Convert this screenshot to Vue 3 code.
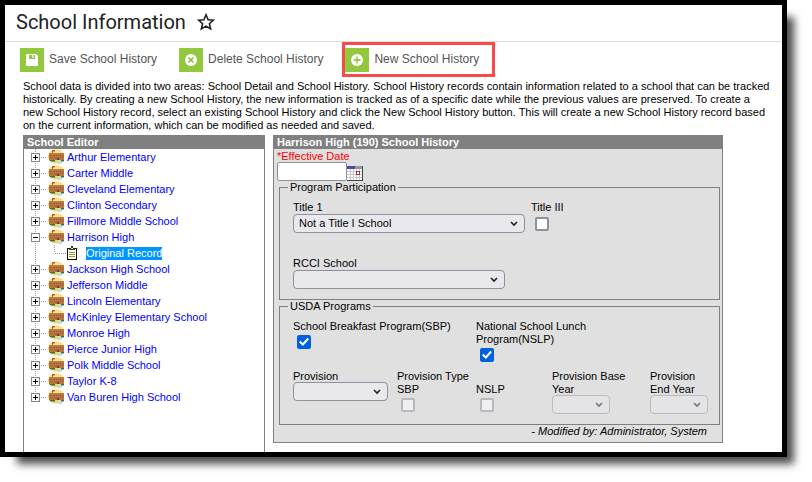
<script setup>
import { ref } from 'vue'

const schools = ref([
  { name: 'Arthur Elementary' },
  { name: 'Carter Middle' },
  { name: 'Cleveland Elementary' },
  { name: 'Clinton Secondary' },
  { name: 'Fillmore Middle School' },
  { name: 'Harrison High', open: true, records: ['Original Record'] },
  { name: 'Jackson High School' },
  { name: 'Jefferson Middle' },
  { name: 'Lincoln Elementary' },
  { name: 'McKinley Elementary School' },
  { name: 'Monroe High' },
  { name: 'Pierce Junior High' },
  { name: 'Polk Middle School' },
  { name: 'Taylor K-8' },
  { name: 'Van Buren High School' },
])

const effectiveDate = ref('')
const title1 = ref('Not a Title I School')
const title3 = ref(false)
const breakfast = ref(true)
const lunch = ref(true)
</script>

<template>
  <div class="window">
    <header class="title-bar">
      <h1>School Information</h1>
      <button class="star" type="button" aria-label="Add to favorites">
        <svg width="18" height="18" viewBox="0 0 18 18">
          <path d="M9 1.8 11.1 6.7 16.4 7.2 12.4 10.7 13.6 15.9 9 13.1 4.4 15.9 5.6 10.7 1.6 7.2 6.9 6.7Z" fill="none" stroke="#222" stroke-width="1.6" />
        </svg>
      </button>
    </header>

    <nav class="toolbar">
      <button class="tool" type="button">
        <svg width="24" height="24" viewBox="0 0 24 24">
          <rect width="24" height="24" fill="#92c83e" />
          <path d="M6 7q0-1 1-1h9l2 2v9q0 1-1 1H7q-1 0-1-1z" fill="#fff" />
          <path d="M9 7h6v4H9z" fill="#92c83e" />
          <path d="M12 7h2v3h-2z" fill="#d4eab4" />
        </svg>
        <span>Save School History</span>
      </button>
      <button class="tool" type="button">
        <svg width="24" height="24" viewBox="0 0 24 24">
          <rect width="24" height="24" fill="#92c83e" />
          <circle cx="12" cy="12" r="6" fill="#fff" />
          <path d="M9.500 9.500l5 5m0-5l-5 5" stroke="#84bd2d" stroke-width="1.5" />
        </svg>
        <span>Delete School History</span>
      </button>
      <button class="tool marked" type="button">
        <svg width="24" height="24" viewBox="0 0 24 24">
          <rect width="24" height="24" fill="#92c83e" />
          <circle cx="12" cy="12" r="6" fill="#fff" />
          <path d="M12 8.500v7M8.500 12h7" stroke="#84bd2d" stroke-width="1.3" />
        </svg>
        <span>New School History</span>
      </button>
    </nav>

    <p class="intro">
      School data is divided into two areas: School Detail and School History. School History records contain information related to a school that can be tracked historically. By creating a new School History, the new information is tracked as of a specific date while the previous values are preserved. To create a new School History record, select an existing School History and click the New School History button. This will create a new School History record based on the current information, which can be modified as needed and saved.
    </p>

    <main class="panels">
      <section class="editor">
        <h2>School Editor</h2>
        <ul class="tree">
          <li v-for="(school, i) in schools" :key="school.name">
            <div class="row">
              <button class="toggle" type="button" :aria-label="'Toggle ' + school.name" @click="school.open = !school.open">
                <svg width="24" height="16" viewBox="0 0 24 16" shape-rendering="crispEdges">
                  <path :d="i === schools.length - 1 ? 'M11.5 0v5' : 'M11.5 0v16'" stroke="#999" stroke-dasharray="1 1" />
                  <path d="M17 8.500h6" stroke="#999" stroke-dasharray="1 1" />
                  <rect x="7.5" y="4.5" width="8" height="8" fill="#fff" stroke="#888" />
                  <path d="M9 8.500h5" stroke="#000" />
                  <path v-if="!school.open" d="M11.500 6v5" stroke="#000" />
                </svg>
              </button>
              <svg width="16" height="16" viewBox="0 0 16 16">
                <ellipse cx="8" cy="7.5" rx="8" ry="7" fill="#f9d455" />
                <ellipse cx="8" cy="4.5" rx="5.5" ry="3" fill="#ffe98a" />
                <path d="M4 1h3v1.500H5V4H4z" fill="#c8503c" />
                <path d="M1 4h15v7H1z" fill="#b8743f" />
                <path d="M1 4h15v1H1z" fill="#c4804c" />
                <path d="M2 6.500h13M2 8.500h13" stroke="#99603a" stroke-dasharray="1 1" />
                <path d="M1 11h6v1.500H3zM13 11h3v1.500h-3z" fill="#2d7a44" />
                <path d="M9 9h2v2H9z" fill="#6d4630" />
                <path d="M9 11h3l3 4h-5z" fill="#d3d6d8" />
              </svg>
              <a href="#">{{ school.name }}</a>
            </div>
            <div v-if="school.open && school.records">
              <div v-for="record in school.records" :key="record" class="row record">
                <svg width="53" height="16" viewBox="0 0 53 16" shape-rendering="crispEdges">
                  <path d="M11.500 0v16M30.500 0v8M31 8.500h11" fill="none" stroke="#999" stroke-dasharray="1 1" />
                  <path d="M43.500 3.500h9v11h-9z" fill="#fffff0" stroke="#111" />
                  <path d="M45 7.500h6M45 9.500h6M45 11.500h6" stroke="#9a9238" />
                  <path d="M45 3h6v2h-6zM47 1h2v2h-2z" fill="#333" />
                  <path d="M47 3h2v1h-2z" fill="#e4dda0" />
                </svg>
                <a href="#" class="selected">{{ record }}</a>
              </div>
            </div>
          </li>
        </ul>
      </section>

      <section class="history">
        <h2>Harrison High (190) School History</h2>
        <div class="date">
          <label for="effective">*Effective Date</label>
          <div class="date-line">
            <input id="effective" v-model="effectiveDate" type="text" />
            <button type="button" aria-label="Pick a date">
              <svg width="16" height="15" viewBox="0 0 16 15" shape-rendering="crispEdges">
                <path d="M0 0h16v15H0z" fill="#fff" />
                <path d="M0 0h8v3H0z" fill="#4848a8" />
                <path d="M8 0h7v3H8z" fill="#999" />
                <path d="M0 5.500h15M0 8.500h15M0 11.500h15M3.500 3v11M6.500 3v11M9.500 3v11M12.500 3v11" stroke="#c8c8c8" />
                <path d="M9.500 5.500h3v3h-3z" fill="#fff" stroke="#a03c44" />
                <path d="M15.500 0v15M0 14.500h16" stroke="#444" />
              </svg>
            </button>
          </div>
        </div>

        <fieldset class="participation">
          <legend>Program Participation</legend>
          <div class="participation-grid">
            <div class="field">
              <label for="title1">Title 1</label>
              <span class="select">
                <select id="title1" v-model="title1">
                  <option>Not a Title I School</option>
                </select>
                <svg width="8" height="6" viewBox="0 0 8 6"><path d="M1 1l3 3 3-3" /></svg>
              </span>
            </div>
            <div class="field">
              <label for="title3">Title III</label>
              <input id="title3" v-model="title3" type="checkbox" />
            </div>
            <div class="field rcci">
              <label for="rcci">RCCI School</label>
              <span class="select">
                <select id="rcci"><option></option></select>
                <svg width="8" height="6" viewBox="0 0 8 6"><path d="M1 1l3 3 3-3" /></svg>
              </span>
            </div>
          </div>
        </fieldset>

        <fieldset class="usda">
          <legend>USDA Programs</legend>
          <div class="usda-grid">
            <div class="field double">
              <label for="sbp">School Breakfast Program(SBP)</label>
              <input id="sbp" v-model="breakfast" type="checkbox" />
            </div>
            <div class="field lunch">
              <label for="nslp">National School Lunch Program(NSLP)</label>
              <input id="nslp" v-model="lunch" type="checkbox" />
            </div>
            <div class="field provision">
              <label for="provision">Provision</label>
              <span class="select">
                <select id="provision"><option></option></select>
                <svg width="8" height="6" viewBox="0 0 8 6"><path d="M1 1l3 3 3-3" /></svg>
              </span>
            </div>
            <div class="types double" role="group" aria-labelledby="ptype">
              <span id="ptype" class="types-title">Provision Type</span>
              <div class="field">
                <label for="ptype-sbp">SBP</label>
                <input id="ptype-sbp" type="checkbox" disabled />
              </div>
              <div class="field">
                <label for="ptype-nslp">NSLP</label>
                <input id="ptype-nslp" type="checkbox" disabled />
              </div>
            </div>
            <div class="field year">
              <label for="base-year">Provision Base Year</label>
              <span class="select">
                <select id="base-year" disabled><option></option></select>
                <svg width="8" height="6" viewBox="0 0 8 6"><path d="M1 1l3 3 3-3" /></svg>
              </span>
            </div>
            <div class="field year">
              <label for="end-year">Provision<br />End Year</label>
              <span class="select">
                <select id="end-year" disabled><option></option></select>
                <svg width="8" height="6" viewBox="0 0 8 6"><path d="M1 1l3 3 3-3" /></svg>
              </span>
            </div>
          </div>
        </fieldset>
        <p class="modified">- Modified by: Administrator, System</p>
      </section>
    </main>
  </div>
</template>

<style>
body {
  background: #fff;
}
#app {
  display: flow-root;
}
</style>

<style scoped>
.window {
  box-sizing: border-box;
  display: flex;
  flex-direction: column;
  min-height: calc(100vh - 25px);
  margin: 0 25px 25px 0;
  border: 5px solid #000;
  background: #fff;
  box-shadow: 12px 12px 8px -5px rgba(0, 0, 0, 0.7);
  font: 11px/13px "Liberation Sans", Arial, sans-serif;
  color: #000;
}
button {
  padding: 0;
  border: 0;
  background: none;
  font: inherit;
  color: inherit;
  cursor: pointer;
}
svg {
  display: block;
  flex: none;
}
.title-bar {
  display: flex;
  align-items: center;
  gap: 11px;
  height: 36px;
  padding-left: 11px;
  border-bottom: 1px solid #ddd;
}
h1 {
  margin: 0;
  padding-bottom: 3px;
  font: 400 20px/24px Roboto, sans-serif;
  color: #222;
}
.star {
  padding-bottom: 3px;
}
.toolbar {
  display: flex;
  gap: 22px;
  padding: 6px 15px 8px;
}
.tool {
  position: relative;
  display: flex;
  align-items: center;
  gap: 5px;
  font: 12px/22px "Liberation Sans", Arial, sans-serif;
  color: #555;
}
.tool span {
  padding-bottom: 2px;
}
.marked::after {
  content: "";
  position: absolute;
  inset: -6px -16px -5px -3px;
  border: 3px solid #f94949;
}
.intro {
  margin: 0;
  padding: 0 11px 3px 18px;
}
.panels {
  display: grid;
  grid-template-columns: minmax(0, 242fr) minmax(0, 450fr);
  flex: 1;
  gap: 8px;
  padding: 0 59px 0 18px;
}
h2 {
  margin: 0;
  padding-left: 3px;
  background: gray;
  color: #fff;
  font: 700 11px/14px "Liberation Sans", Arial, sans-serif;
}
.editor {
  border: solid gray;
  border-width: 0 1px;
}
.tree {
  margin: 0;
  padding: 0;
  list-style: none;
}
.row {
  display: flex;
  align-items: center;
  height: 16px;
}
.row a {
  margin-left: 3px;
  color: #00f;
  text-decoration: none;
}
.row .selected {
  margin-left: 9px;
  background: #0095ff;
  color: #fff;
}
.history {
  align-self: start;
  border: solid gray;
  border-width: 0 1px 1px;
  background: #e0e0e0;
}
.date {
  padding: 1px 3px 0;
}
.date label {
  display: block;
  line-height: 12px;
  color: #f00;
}
.date-line {
  display: flex;
  align-items: flex-end;
}
.date-line input {
  box-sizing: border-box;
  width: 70px;
  height: 19px;
  border: 1px solid #8f8f9d;
  border-radius: 2px;
  font: inherit;
}
fieldset {
  margin: 0 2px 0 5px;
  padding: 0 11px 0 13px;
  border: 1px solid gray;
}
legend {
  margin-left: -5px;
  padding: 0 2px;
}
.field {
  display: flex;
  flex-direction: column;
  align-items: flex-start;
}
.select {
  display: grid;
  width: 100%;
  height: 19px;
  align-items: center;
}
.select > * {
  grid-area: 1 / 1;
}
.select svg {
  justify-self: end;
  margin-right: 7px;
  pointer-events: none;
}
.select path {
  fill: none;
  stroke: #222;
  stroke-width: 1.6;
}
select {
  appearance: none;
  box-sizing: border-box;
  width: 100%;
  height: 19px;
  padding: 0 20px 0 5px;
  border: 1px solid #8f8f9d;
  border-radius: 4px;
  background: #e9e9ed;
  font: inherit;
  color: #000;
}
select:disabled {
  border-color: #bbbbc4;
  background: #e4e4e6;
  opacity: 1;
}
select:disabled + svg path {
  stroke: #777;
}
input[type="checkbox"] {
  appearance: none;
  box-sizing: border-box;
  display: grid;
  width: 14px;
  height: 14px;
  margin: 3px 4px 0;
  border: 2px solid #8f8f9d;
  border-radius: 2px;
  background: #fff;
}
input[type="checkbox"]:checked {
  border-color: #0061e0;
  background: #0061e0;
}
input[type="checkbox"]:checked::before {
  content: "";
  background: #fff;
  clip-path: polygon(0 52%, 14% 38%, 38% 60%, 84% 8%, 100% 22%, 39% 90%);
}
input[type="checkbox"]:disabled {
  border-color: #b8b8c0;
  background: #efefef;
}
.participation-grid {
  display: grid;
  grid-template-columns: 232px 1fr;
  column-gap: 6px;
  row-gap: 24px;
  padding: 7px 0 10px;
}
.rcci {
  width: 212px;
}
.usda-grid {
  display: grid;
  grid-template-columns: 104fr 79fr 76fr 98fr 58fr;
  row-gap: 8px;
  padding: 7px 0 10px;
}
.usda .field input[type="checkbox"] {
  margin-top: 2px;
}
.usda .select {
  margin-top: -1px;
}
.double {
  grid-column: span 2;
}
.lunch {
  grid-column: span 3;
}
.lunch label {
  max-width: 130px;
}
.provision {
  padding-right: 9px;
}
.types {
  display: grid;
  grid-template-columns: 79fr 76fr;
  align-content: start;
}
.types-title {
  grid-column: span 2;
}
.year label {
  max-width: 80px;
}
.year .select {
  width: 58px;
}
.modified {
  margin: 0;
  padding: 0 15px 4px;
  text-align: right;
  font-style: italic;
}
</style>
